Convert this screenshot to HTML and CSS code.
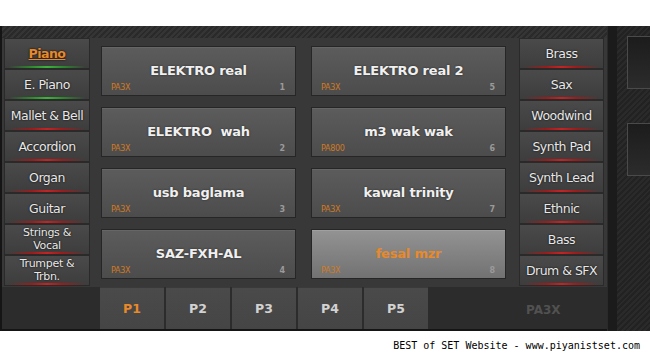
FILE: index.html
```html
<!DOCTYPE html>
<html lang="en">
<head>
  <meta charset="UTF-8">
  <meta name="viewport" content="width=device-width, initial-scale=1">
  <title>PA3X Sound Sets</title>
  <link rel="stylesheet" href="styles.css">
</head>
<body>
  <div class="shot">
    <div class="panel">
      <div class="hatch"></div>

      <div class="deck">
        <div class="family">
          <button class="fam active green">Piano</button>
          <button class="fam green">E. Piano</button>
          <button class="fam">Mallet &amp; Bell</button>
          <button class="fam">Accordion</button>
          <button class="fam">Organ</button>
          <button class="fam">Guitar</button>
          <button class="fam two">Strings &amp;<br>Vocal</button>
          <button class="fam two">Trumpet &amp;<br>Trbn.</button>
        </div>

        <div class="tiles">
          <div class="tile"><span class="name">ELEKTRO real</span><span class="src">PA3X</span><span class="num">1</span></div>
          <div class="tile"><span class="name">ELEKTRO real 2</span><span class="src">PA3X</span><span class="num">5</span></div>
          <div class="tile"><span class="name">ELEKTRO&nbsp; wah</span><span class="src">PA3X</span><span class="num">2</span></div>
          <div class="tile"><span class="name">m3 wak wak</span><span class="src">PA800</span><span class="num">6</span></div>
          <div class="tile"><span class="name">usb baglama</span><span class="src">PA3X</span><span class="num">3</span></div>
          <div class="tile"><span class="name">kawal trinity</span><span class="src">PA3X</span><span class="num">7</span></div>
          <div class="tile"><span class="name">SAZ-FXH-AL</span><span class="src">PA3X</span><span class="num">4</span></div>
          <div class="tile selected"><span class="name">fesal mzr</span><span class="src">PA3X</span><span class="num">8</span></div>
        </div>

        <div class="family">
          <button class="fam">Brass</button>
          <button class="fam">Sax</button>
          <button class="fam">Woodwind</button>
          <button class="fam">Synth Pad</button>
          <button class="fam">Synth Lead</button>
          <button class="fam">Ethnic</button>
          <button class="fam">Bass</button>
          <button class="fam">Drum &amp; SFX</button>
        </div>
      </div>

      <div class="pager">
        <button class="page active">P1</button>
        <button class="page">P2</button>
        <button class="page">P3</button>
        <button class="page">P4</button>
        <button class="page">P5</button>
        <span class="model">PA3X</span>
      </div>
    </div>

    <div class="divider"></div>

    <div class="side">
      <div class="slot"></div>
      <div class="slot"></div>
    </div>
  </div>

  <div class="credit">BEST of SET Website - www.piyanistset.com</div>
</body>
</html>
```

FILE: styles.css
```css
* {
  margin: 0;
  padding: 0;
  box-sizing: border-box;
}

body {
  background: #ffffff;
  font-family: 'DejaVu Sans', Verdana, sans-serif;
}

.shot {
  display: flex;
  height: 305px;
  margin-top: 26px;
  background: #1b1b1b;
}

.panel {
  width: 607px;
  display: flex;
  flex-direction: column;
  background: #383838;
  border-left: 2px solid #151515;
  border-bottom: 2px solid #151515;
}

.hatch {
  height: 12px;
  background: repeating-linear-gradient(135deg, #2a2a2a 0 2px, #353535 2px 4px);
}

.deck {
  display: flex;
  height: 249px;
  padding: 0 3px 0 2px;
}

.family {
  width: 86px;
  display: grid;
  grid-template-rows: repeat(8, 31px);
}

.deck .family:last-child {
  width: 85px;
}

.fam {
  position: relative;
  overflow: hidden;
  background: linear-gradient(#4a4a4a, #3d3d3d);
  border: 1px solid #2a2a2a;
  color: #e8e8e8;
  font-family: inherit;
  font-size: 12.5px;
  letter-spacing: -0.5px;
  text-shadow: 0 0 2px #000;
  cursor: pointer;
}

.fam::after {
  content: "";
  position: absolute;
  left: 4px;
  right: 4px;
  bottom: 0;
  height: 2px;
  background: linear-gradient(to right, transparent, #9a1c1c 30%, #c42424 50%, #9a1c1c 70%, transparent);
}

.fam.green::after {
  background: linear-gradient(to right, transparent, #2d8a2d 30%, #3fb23f 50%, #2d8a2d 70%, transparent);
}

.fam.two {
  font-size: 11px;
  line-height: 13px;
  padding-bottom: 1px;
  letter-spacing: -0.3px;
}

.fam.active {
  color: #e8892a;
  font-weight: bold;
  text-decoration: underline;
}

.tiles {
  width: 405px;
  margin: 0 13px 0 11px;
  padding-top: 8px;
  display: grid;
  grid-template-columns: 195px 195px;
  grid-template-rows: repeat(4, 50px);
  column-gap: 15px;
  row-gap: 11px;
}

.tile {
  position: relative;
  display: flex;
  align-items: center;
  justify-content: center;
  padding-bottom: 1px;
  background: linear-gradient(#5c5c5c, #4c4c4c);
  border: 1px solid #262626;
  box-shadow: inset 0 1px 0 #666;
}

.tile.selected {
  background: linear-gradient(#939393, #727272);
  box-shadow: inset 0 1px 0 #a0a0a0;
}

.name {
  color: #f0f0f0;
  font-weight: bold;
  font-size: 13px;
  letter-spacing: -0.2px;
  text-shadow: 0 0 2px #222;
}

.selected .name {
  color: #e8892a;
  text-shadow: none;
}

.src {
  position: absolute;
  left: 9px;
  bottom: 3px;
  font-size: 8px;
  letter-spacing: -0.3px;
  color: #d07a22;
}

.num {
  position: absolute;
  right: 10px;
  bottom: 3px;
  font-size: 8px;
  font-weight: bold;
  color: #9a9a9a;
}

.pager {
  flex: 1;
  display: flex;
  gap: 2px;
  padding-left: 98px;
  background: #2c2c2c;
}

.page {
  width: 64px;
  background: linear-gradient(#4a4a4a, #454545);
  border: none;
  border-top: 1px solid #3a3a3a;
  color: #d2d2d2;
  font-family: inherit;
  font-size: 12.5px;
  font-weight: bold;
  cursor: pointer;
}

.page.active {
  color: #e8892a;
}

.model {
  margin-left: 96px;
  align-self: center;
  padding-top: 3px;
  font-size: 12px;
  font-weight: bold;
  color: #515151;
}

.divider {
  width: 10px;
  background: #1b1b1b;
  border-left: 1px solid #2a2a2a;
}

.side {
  flex: 1;
  padding: 10px 0 0 10px;
  display: flex;
  flex-direction: column;
  gap: 34px;
  background: repeating-linear-gradient(135deg, #222 0 2px, #2a2a2a 2px 4px);
}

.slot {
  height: 53px;
  border: 1px solid #4a4a4a;
  border-right: none;
  background: linear-gradient(#1c1c1c, #2c2c2c);
}

.credit {
  margin-top: 9px;
  padding-right: 10px;
  text-align: right;
  font-family: 'DejaVu Sans Mono', 'Liberation Mono', monospace;
  font-size: 10px;
  color: #000;
}
```
